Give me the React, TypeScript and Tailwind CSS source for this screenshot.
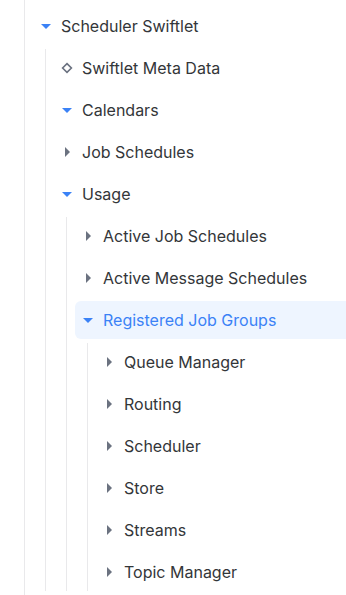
import type { ReactNode } from "react";

type Node = {
  label: string;
  kind: "open" | "closed" | "leaf";
  active?: boolean;
  children?: Node[];
};

const TREE: Node[] = [
  {
    label: "Scheduler Swiftlet",
    kind: "open",
    children: [
      { label: "Swiftlet Meta Data", kind: "leaf" },
      { label: "Calendars", kind: "open" },
      { label: "Job Schedules", kind: "closed" },
      {
        label: "Usage",
        kind: "open",
        children: [
          { label: "Active Job Schedules", kind: "closed" },
          { label: "Active Message Schedules", kind: "closed" },
          {
            label: "Registered Job Groups",
            kind: "open",
            active: true,
            children: [
              { label: "Queue Manager", kind: "closed" },
              { label: "Routing", kind: "closed" },
              { label: "Scheduler", kind: "closed" },
              { label: "Store", kind: "closed" },
              { label: "Streams", kind: "closed" },
              { label: "Topic Manager", kind: "closed" },
            ],
          },
        ],
      },
    ],
  },
];

function Icon({ kind }: { kind: Node["kind"] }) {
  if (kind === "open") {
    return (
      <svg width="16" height="16" viewBox="0 0 16 16" aria-hidden>
        <path d="M3 6h10l-5 5z" fill="#3b82f6" />
      </svg>
    );
  }
  if (kind === "closed") {
    return (
      <svg width="16" height="16" viewBox="0 0 16 16" aria-hidden>
        <path d="M6 3v10l5-5z" fill="#6b7280" />
      </svg>
    );
  }
  return (
    <svg width="16" height="16" viewBox="0 0 16 16" aria-hidden>
      <path
        d="M8 3.6L12.4 8 8 12.4 3.6 8z"
        fill="none"
        stroke="#6b7280"
        strokeWidth="1.6"
      />
    </svg>
  );
}

function Branch({ children }: { children: ReactNode }) {
  return (
    <div className="ml-[12px] border-l border-[#e9e9eb] pl-[8px]">{children}</div>
  );
}

function TreeNode({ node }: { node: Node }) {
  return (
    <div>
      <div
        className={`mt-1 flex h-[38px] items-center rounded-l-md pl-[5px] ${
          node.active ? "bg-[#eef5ff] text-[#3b82f6]" : "text-[#333639]"
        }`}
      >
        <span className="flex h-4 w-4 shrink-0 items-center justify-center">
          <Icon kind={node.kind} />
        </span>
        <span className="ml-[7px] whitespace-nowrap text-[16px] leading-none">
          {node.label}
        </span>
      </div>
      {node.children && (
        <Branch>
          {node.children.map((c) => (
            <TreeNode key={c.label} node={c} />
          ))}
        </Branch>
      )}
    </div>
  );
}

export default function App() {
  return (
    <div
      className="h-[595px] w-[346px] overflow-hidden bg-white"
      style={{ fontFamily: "Inter, 'Noto Sans', sans-serif" }}
    >
      <div className="ml-[24px] h-[595px] border-l border-[#e9e9eb] pl-[8px] pt-[3px]">
        {TREE.map((n) => (
          <TreeNode key={n.label} node={n} />
        ))}
      </div>
    </div>
  );
}
